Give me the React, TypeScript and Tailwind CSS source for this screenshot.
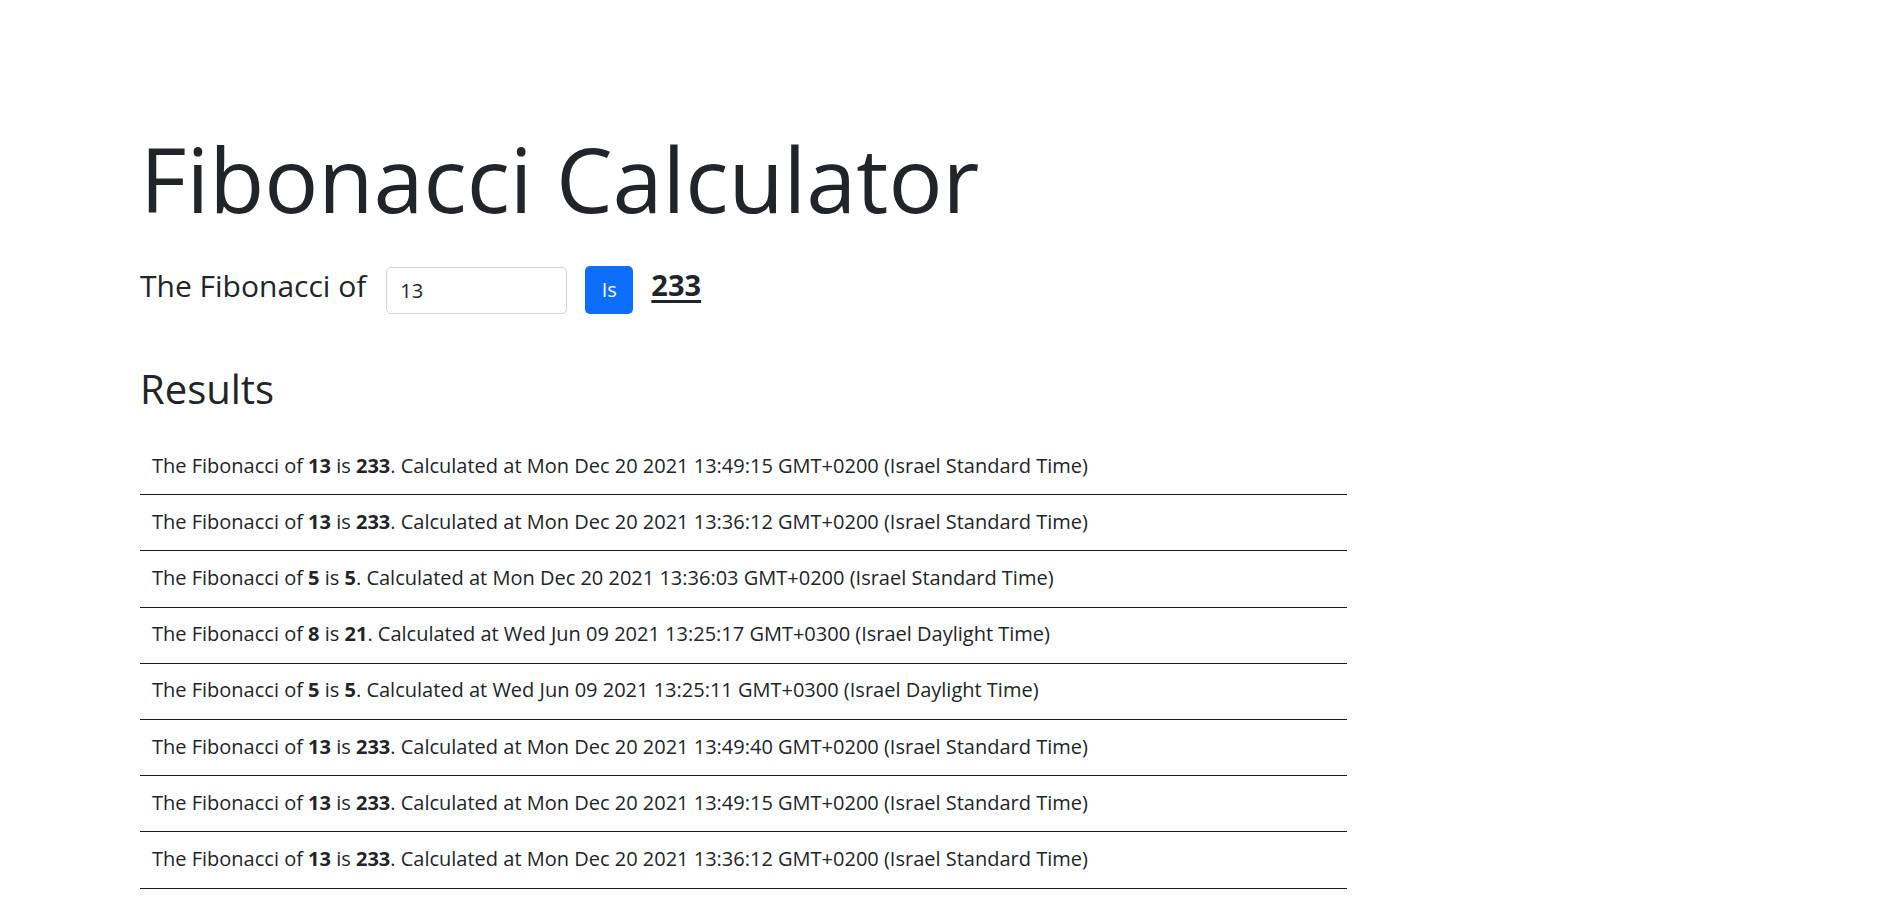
import { useState } from "react";

const results = [
  { n: 13, v: 233, at: "Mon Dec 20 2021 13:49:15 GMT+0200 (Israel Standard Time)" },
  { n: 13, v: 233, at: "Mon Dec 20 2021 13:36:12 GMT+0200 (Israel Standard Time)" },
  { n: 5, v: 5, at: "Mon Dec 20 2021 13:36:03 GMT+0200 (Israel Standard Time)" },
  { n: 8, v: 21, at: "Wed Jun 09 2021 13:25:17 GMT+0300 (Israel Daylight Time)" },
  { n: 5, v: 5, at: "Wed Jun 09 2021 13:25:11 GMT+0300 (Israel Daylight Time)" },
  { n: 13, v: 233, at: "Mon Dec 20 2021 13:49:40 GMT+0200 (Israel Standard Time)" },
  { n: 13, v: 233, at: "Mon Dec 20 2021 13:49:15 GMT+0200 (Israel Standard Time)" },
  { n: 13, v: 233, at: "Mon Dec 20 2021 13:36:12 GMT+0200 (Israel Standard Time)" },
];

const App = () => {
  const [num, setNum] = useState("13");

  return (
    <div className="min-h-screen bg-white font-['Open_Sans',sans-serif] text-[#212529]">
      <div className="pl-[140px] pt-[124px]">
        <h1 className="text-[90px] font-normal leading-[108px]">Fibonacci Calculator</h1>

        <div className="mt-[34px] flex h-[48px] items-center">
          <span className="mb-[9px] text-[30px] leading-[36px]">The Fibonacci of</span>
          <input
            value={num}
            onChange={(e) => setNum(e.target.value)}
            className="ml-[20px] h-[47px] w-[181px] rounded-[5px] border border-[#ced4da] px-[13px] text-[20px] text-[#212529] outline-none"
          />
          <button className="ml-[18px] h-[48px] w-[48px] rounded-[5px] bg-[#0d6efd] text-[20px] text-white">
            Is
          </button>
          <a href="#" className="mb-[11px] ml-[18px] text-[29px] font-bold underline decoration-[3px] underline-offset-[4px]">
            233
          </a>
        </div>

        <h2 className="mt-[51px] text-[40px] leading-[48px]">Results</h2>

        <ul className="mt-[26px] w-[1207px]">
          {results.map((r, i) => (
            <li key={i} className="flex h-[56.2px] items-center border-b border-[#1a1a1a] pb-[2px] pl-3 text-[20px] leading-[30px]">
              <span>
                The Fibonacci of <b>{r.n}</b> is <b>{r.v}</b>. Calculated at {r.at}
              </span>
            </li>
          ))}
        </ul>
      </div>
    </div>
  );
};

export default App;
